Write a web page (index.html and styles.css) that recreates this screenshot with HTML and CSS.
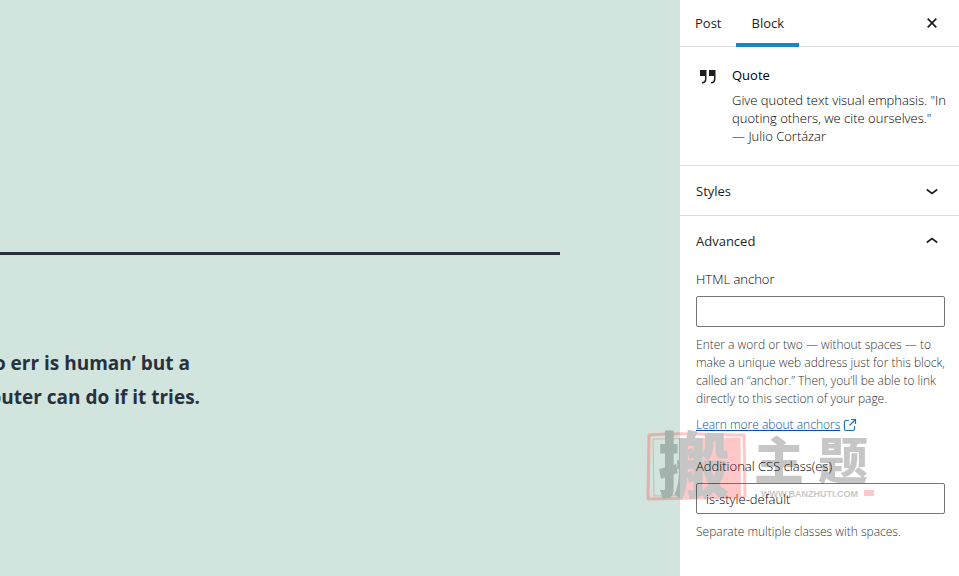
FILE: index.html
```html
<!DOCTYPE html>
<html lang="en">
<head>
<meta charset="utf-8">
<title>Block settings</title>
<link rel="stylesheet" href="styles.css">
</head>
<body>
<div class="editor">
  <main class="canvas">
    <hr class="separator">
    <blockquote class="quote">
      <span class="quote-line quote-line-short">o err is human’ but a</span>
      <span class="quote-line">puter can do if it tries.</span>
    </blockquote>
  </main>
  <aside class="sidebar">
    <header class="tabs">
      <button class="tab" type="button">Post</button>
      <button class="tab tab-active" type="button">Block</button>
      <button class="close" type="button" aria-label="Close settings">
        <svg width="24" height="24" viewBox="0 0 24 24"><path d="M7.700 7.700l8.600 8.600M16.300 7.700l-8.600 8.600" fill="none" stroke="#1e1e1e" stroke-width="1.700"/></svg>
      </button>
    </header>
    <section class="card">
      <svg class="card-icon" width="24" height="24" viewBox="0 0 24 24" fill="#1e1e1e"><path d="M4 4h6.500v8.500q0 5-4.500 5V16q3-.2 3-3.500V10H4zM13 4h6.500v8.500q0 5-4.500 5V16q3-.2 3-3.500V10h-5z"/></svg>
      <div>
        <h2 class="title">Quote</h2>
        <p class="description">Give quoted text visual emphasis. "In<br>quoting others, we cite ourselves."<br>— Julio Cortázar</p>
      </div>
    </section>
    <section class="panel">
      <button class="panel-toggle" type="button">Styles
        <svg width="24" height="24" viewBox="0 0 24 24"><path d="M6.800 10.500l5.200 4 5.200-4" fill="none" stroke="#1e1e1e" stroke-width="1.600"/></svg>
      </button>
    </section>
    <section class="panel">
      <button class="panel-toggle" type="button">Advanced
        <svg width="24" height="24" viewBox="0 0 24 24"><path d="M6.800 13.500l5.200-4 5.200 4" fill="none" stroke="#1e1e1e" stroke-width="1.600"/></svg>
      </button>
      <div class="panel-body">
        <div class="field">
          <label for="anchor">HTML anchor</label>
          <input id="anchor" type="text">
          <p class="help">Enter a word or two — without spaces — to<br>make a unique web address just for this block,<br>called an “anchor.” Then, you’ll be able to link<br>directly to this section of your page.</p>
          <a class="link" href="#anchors"><span>Learn more about anchors</span><svg width="14" height="14" viewBox="0 0 14 14"><path d="M6 2.500H3Q1.500 2.500 1.500 4V11Q1.500 12.500 3 12.500h7Q11.500 12.500 11.500 11V8M8 1.500h4.500V6M12.500 1.500L6.500 7.500" fill="none" stroke="#2271b1" stroke-width="1.200"/></svg></a>
        </div>
        <div class="field">
          <label for="classes">Additional CSS class(es)</label>
          <input id="classes" type="text" value="is-style-default">
          <p class="help">Separate multiple classes with spaces.</p>
        </div>
      </div>
    </section>
  </aside>
  <svg class="watermark" width="240" height="80" viewBox="0 0 240 80">
    <path d="M9 10q24-2 50-1t45 1l1 62-48 1-49 1z" fill="none" stroke="#ff2424" stroke-width="3" stroke-linejoin="round"/>
    <path d="M13 14l87-1v57l-86 1z" fill="none" stroke="#ff2424" stroke-width="1"/>
    <path d="M40 14l60-1 1 58-61 1z" fill="#ff2424"/>
    <text class="seal" x="18" y="67">搬</text>
    <text class="name" x="114" y="54">主</text>
    <text class="name" x="178" y="54">题</text>
    <text class="site" x="121" y="72">WWW.BANZHUTI.COM</text>
    <path d="M224 65h10v6h-10z" fill="#ff2424"/>
  </svg>
</div>
</body>
</html>
```
FILE: styles.css
```css
* { box-sizing: border-box; }
body {
  margin: 0;
  font: 300 13px/18px "Open Sans", "Noto Sans", sans-serif;
  color: #000;
}
button { border: 0; background: none; font: inherit; font-weight: 400; color: #1e1e1e; }
h2, p, blockquote { margin: 0; }
svg { flex: none; }

.editor { position: relative; display: flex; min-height: 100vh; }
.canvas {
  flex: 1;
  min-width: 0;
  padding: 252px 120px 0 0;
  overflow: hidden;
  background: #d1e4dd;
}
.separator { height: 3px; margin: 0; border: 0; background: #28303d; }
.quote {
  width: 200px;
  margin-top: 91px;
  font-size: 19px;
  font-weight: 700;
  line-height: 34px;
  color: #28303d;
}
.quote-line { display: flex; justify-content: flex-end; white-space: nowrap; }
.quote-line-short { padding-right: 10px; }

.sidebar { width: 279px; background: #fff; }
.tabs { display: flex; height: 47px; border-bottom: 1px solid #ddd; }
.tab { height: 47px; padding: 0 15px 2px; }
.tab-active { border-bottom: 4px solid #1488c6; padding: 2px 15px 0; }
.close { margin-left: auto; padding: 0 15px; display: flex; align-items: center; }
.card { display: flex; gap: 12px; padding: 19px 0 20px 16px; }
.title { font-size: 13px; font-weight: 400; line-height: 18px; margin-bottom: 7px; }
.description { white-space: nowrap; }
.panel { border-top: 1px solid #ddd; }
.panel-toggle {
  display: flex;
  align-items: center;
  justify-content: space-between;
  width: 100%;
  height: 49px;
  padding: 0 15px 0 16px;
}
.panel-body { padding: 5px 14px 16px 16px; }
.field { margin-bottom: 23px; }
.field label { display: block; margin-bottom: 8px; }
.field input {
  display: block;
  width: 100%;
  height: 31px;
  padding: 0 9px;
  border: 1px solid #757575;
  border-radius: 2px;
  background: #fff;
  font: inherit;
  color: inherit;
}
.help { margin-top: 9px; font-size: 12px; color: #333; white-space: nowrap; }
.link {
  display: flex;
  align-items: center;
  gap: 3px;
  margin-top: 8px;
  font-size: 12px;
  color: #00529c;
  text-decoration: none;
}
.link span { text-decoration: underline; }

.watermark {
  position: absolute;
  left: 640px;
  top: 425px;
  opacity: .25;
  pointer-events: none;
}
.seal, .name { font-family: "Noto Sans CJK SC", sans-serif; font-weight: 900; fill: #202020; }
.seal { font-size: 72px; }
.name { font-size: 50px; }
.site { font: 700 9px "Liberation Sans", sans-serif; fill: #202020; }
```
